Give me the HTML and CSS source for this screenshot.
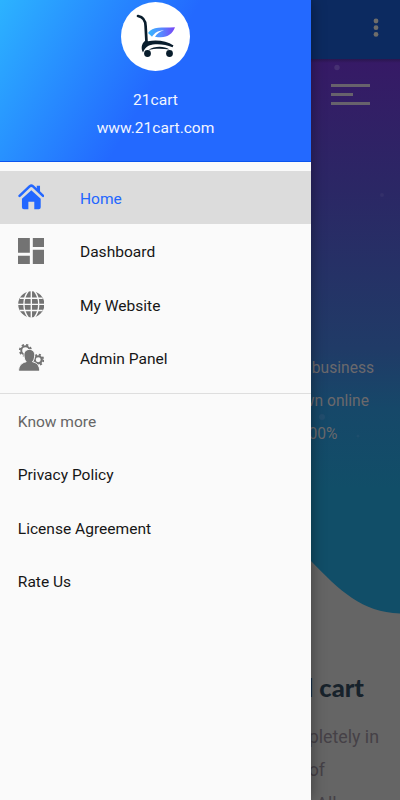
FILE: index.html
```html
<!DOCTYPE html>
<html lang="en">
  <head>
    <meta charset="UTF-8" />
    <meta name="viewport" content="width=device-width, initial-scale=1.0" />
    <title>21cart</title>
    <link rel="stylesheet" href="styles.css">
  </head>

  <body>
    <!-- page behind the drawer -->
    <main class="page">
      <header class="topbar">
        <svg class="dots" viewBox="0 0 6 20">
          <circle cx="3" cy="3" r="2.4" /><circle cx="3" cy="9.7" r="2.4" /><circle cx="3" cy="16.4" r="2.4" />
        </svg>
      </header>
      <section class="hero">
        <div class="burger"><span></span><span class="short"></span><span></span></div>
        <div class="hero-text">
          <p class="line-a">business</p>
          <p class="line-b">own online</p>
          <p class="line-c">100%</p>
        </div>
        <svg class="wave" viewBox="0 0 400 560">
          <path fill="#656565" d="M300 490 L311 502 C340 532 362 553 400 554.5 V560 H300z" />
          <g fill="#7a7396">
            <circle cx="337" cy="8.500" r="2.700" opacity=".25" /><circle cx="382" cy="136" r="2" opacity=".12" />
            <circle cx="322" cy="358" r="3" opacity=".12" /><circle cx="358" cy="377" r="1.500" opacity=".1" />
          </g>
        </svg>
      </section>
      <section class="about">
        <h2>digital cart</h2>
        <p class="line-d">completely in</p>
        <p class="line-e">of</p>
        <p class="line-f">All our</p>
      </section>
    </main>

    <aside class="drawer">
      <header class="drawer-header">
        <svg class="logo" viewBox="0 0 69 69">
          <defs>
            <linearGradient id="leaf" x1="0" x2="1">
              <stop offset="0" stop-color="#35b9ff" />
              <stop offset=".5" stop-color="#5689ff" />
              <stop offset="1" stop-color="#7943f5" />
            </linearGradient>
          </defs>
          <circle cx="34.500" cy="34.500" r="34.500" fill="#fff" />
          <path fill="none" stroke="#091d2c" stroke-width="2.700" stroke-linecap="round" d="M17 14 C22 15 24.500 19 24.600 24 L25.500 40" />
          <path fill="#091d2c" d="M24.300 38.500 L27 39.200 C36 37.800 46 38.800 52.500 43.500 L51.500 45.200 C44 42 34 41.300 28 43.500 C25 44.800 23.500 47 22 50.500 C20 47 20 42 24.300 38.500z" />
          <path fill="#091d2c" d="M27.500 48 C33 44 43 43.700 48.500 47.500 C41 46.300 33 46.500 27.500 48z" />
          <circle cx="26.500" cy="51.500" r="3.400" fill="#091d2c" />
          <circle cx="48.500" cy="51.500" r="3.400" fill="#091d2c" />
          <path fill="url(#leaf)" d="M27 31 C32 24 40 26 54 25.300 C51 33 45 37 34 34.700 C36 31.500 39 29.300 43 28.500 C36 28.500 34 31 31 34.700z" />
        </svg>
        <p class="name">21cart</p>
        <p class="site">www.21cart.com</p>
      </header>

      <nav class="menu">
        <a class="item active">
          <svg class="icon" viewBox="0 0 27 27">
            <path fill="none" stroke="currentColor" stroke-width="2.600" stroke-linecap="round" stroke-linejoin="round" d="M1.600 12 L12 2.200 Q13.500 1 15 2.200 L25.400 12" />
            <path fill="currentColor" d="M19 1.800h3.300v7L19 5.800z M13.500 6.300 L23 15 V23.500 Q23 25.500 21 25.500 H16.500 V18 H10.500 V25.500 H6 Q4 25.500 4 23.500 V15z" />
          </svg>
          <span>Home</span>
        </a>
        <a class="item">
          <svg class="icon" viewBox="0 0 27 27">
            <path fill="currentColor" d="M0 0h12v15H0z M15 0h12v9H15z M0 18h12v9H0z M15 12h12v15H15z" />
          </svg>
          <span>Dashboard</span>
        </a>
        <a class="item">
          <svg class="icon" viewBox="0 0 27 27">
            <circle cx="13.500" cy="13.500" r="13.300" fill="currentColor" />
            <path fill="none" stroke="#fafafa" stroke-width="1.400" d="M13.500 0v27 M0 13.500h27 M2 7.300h23 M2 19.700h23 M10.500 0 C4.500 7 4.500 20 10.500 27 M16.500 0 C22.500 7 22.500 20 16.500 27" />
          </svg>
          <span>My Website</span>
        </a>
        <a class="item">
          <svg class="icon" viewBox="0 0 27 27">
            <g fill="none" stroke="currentColor">
              <circle cx="7.500" cy="6.500" r="4.200" stroke-width="2" />
              <circle cx="7.500" cy="6.500" r="5.700" stroke-width="1.800" stroke-dasharray="2.300 2.180" />
              <circle cx="20.500" cy="16" r="3.600" stroke-width="2.200" />
              <circle cx="20.500" cy="16" r="5.200" stroke-width="1.800" stroke-dasharray="2.100 1.980" />
            </g>
            <path fill="currentColor" stroke="#fafafa" stroke-width="1" d="M11.500 5.500 C15.500 5.500 17.200 8.500 16.900 12 C16.700 15 15.700 17 14.700 18 C19 19 22 21.500 22 27.600 H.6 C.6 21.500 4 19 8.300 18 C7.300 17 6.300 15 6.100 12 C5.800 8.500 7.500 5.500 11.500 5.500z" />
          </svg>
          <span>Admin Panel</span>
        </a>
      </nav>

      <nav class="more">
        <p class="item subtitle">Know more</p>
        <a class="item">Privacy Policy</a>
        <a class="item">License Agreement</a>
        <a class="item">Rate Us</a>
      </nav>
    </aside>
  </body>
</html>
```
FILE: styles.css
```css
html {
  box-sizing: border-box;
  font-family: Roboto, sans-serif;
  font-size: 15.56px;
}

*,
*:before,
*:after {
  box-sizing: inherit;
}

body {
  margin: 0;
  height: 800px;
  position: relative;
  overflow: hidden;
}

p,
h2 {
  margin: 0;
}

/* page, already darkened by the scrim */
.page {
  height: 800px;
  overflow: hidden;
  background-color: #656565;
  text-align: right;
  color: #716d70;
}

.topbar {
  height: 59px;
  padding: 18px 21.5px 0 0;
  background-color: #0c2a60;
}

.dots {
  display: block;
  width: 6px;
  height: 20px;
  margin-left: auto;
  fill: #6f6d6a;
}

.hero {
  position: relative;
  height: 560px;
  padding-top: 25px;
  background: linear-gradient(#2a164f 0, #361a66 4px, #2b2765 130px, #203b67 290px, #164869 350px, #114e68 430px, #114e68 100%);
}

.burger {
  width: 39px;
  height: 21px;
  margin-left: 331px;
  display: flex;
  flex-direction: column;
  justify-content: space-between;
}

.burger span {
  height: 3px;
  background-color: #67626c;
}

.burger .short {
  width: 22px;
}

.hero-text {
  margin-top: 246.5px;
  font-size: 15.6px;
  line-height: 33.3px;
  color: #6b696c;
}

.line-a {
  padding-right: 26px;
}

.line-b {
  padding-right: 31px;
}

.line-c {
  padding-right: 62.5px;
}

/* lies over the hero background */
.wave {
  position: absolute;
  left: 0;
  top: 0;
  width: 400px;
  height: 560px;
}

.about {
  padding-top: 50px;
  font-size: 17.8px;
  line-height: 33.3px;
  color: #454147;
}

.about h2 {
  padding-right: 36px;
  margin-bottom: 14px;
  font-family: Lato, sans-serif;
  font-size: 25.5px;
  font-weight: 900;
  line-height: 37px;
  color: #17222b;
}

.line-d {
  padding-right: 21px;
}

.line-e {
  padding-right: 75px;
}

.line-f {
  padding-right: 33px;
}

/* drawer over the page */
.drawer {
  position: absolute;
  left: 0;
  top: 0;
  width: 311px;
  height: 800px;
  background-color: #fafafa;
  box-shadow: 0 0 14px rgba(0, 0, 0, 0.4);
  color: #161616;
}

.drawer-header {
  height: 162px;
  padding-top: 2px;
  border-bottom: 1px solid #0b55ee;
  background: linear-gradient(120deg, #2cb3ff 0, #2369ff 50%, #2369ff 100%);
  color: #f1f5ff;
  text-align: center;
}

.logo {
  display: block;
  width: 69px;
  height: 69px;
  margin: 0 auto 15px;
}

.name,
.site {
  line-height: 28px;
}

.menu {
  padding: 9px 0 8.7px;
  border-bottom: 1.5px solid #dedede;
}

.item {
  display: flex;
  align-items: center;
  height: 53.33px;
  padding-left: 17.8px;
}

.item span,
.more .item {
  padding-top: 2.4px;
}

.icon {
  width: 26.67px;
  height: 26.67px;
  margin-right: 35.5px;
  color: #737373;
}

.active,
.active .icon {
  color: #2367ff;
}

.active {
  background-color: #dcdcdc;
}

.subtitle {
  color: #666;
}
```
